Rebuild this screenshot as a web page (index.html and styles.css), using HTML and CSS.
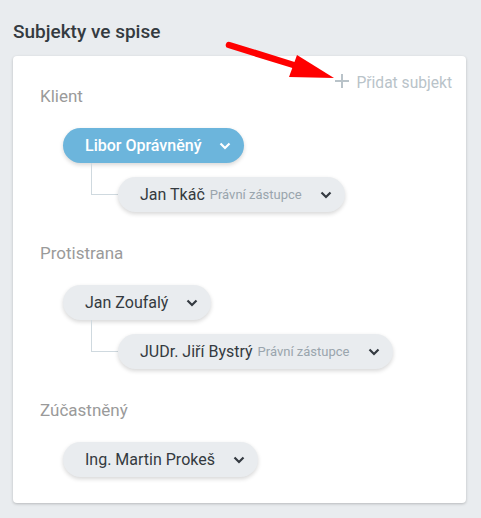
FILE: index.html
```html
<!DOCTYPE html>
<html lang="cs">
<head>
<meta charset="utf-8">
<title>Subjekty ve spise</title>
<link rel="stylesheet" href="styles.css">
</head>
<body>
<h1 class="title">Subjekty ve spise</h1>
<div class="card">
  <div class="section">
    <div class="head">
      <div class="label first">Klient</div>
      <div class="add"><svg class="plus" width="14" height="14" viewBox="0 0 14 14"><path d="M7 0v14M0 7h14" stroke="#b9c3c9" stroke-width="2"/></svg><span>Přidat subjekt</span></div>
    </div>
    <div class="tree">
      <div class="chip blue"><span class="name">Libor Oprávněný</span><svg class="chev" width="12" height="8" viewBox="0 0 12 8"><path d="M1.5 1.5l4.5 4.5 4.5-4.5" fill="none" stroke="#fff" stroke-width="2.2"/></svg></div>
      <div class="child">
        <div class="conn"></div>
        <div class="chip"><span class="name">Jan Tkáč</span><span class="role">Právní zástupce</span><svg class="chev" width="12" height="8" viewBox="0 0 12 8"><path d="M1.5 1.5l4.5 4.5 4.5-4.5" fill="none" stroke="#343a40" stroke-width="2.2"/></svg></div>
      </div>
    </div>
  </div>
  <div class="section">
    <div class="label">Protistrana</div>
    <div class="tree">
      <div class="chip"><span class="name">Jan Zoufalý</span><svg class="chev" width="12" height="8" viewBox="0 0 12 8"><path d="M1.5 1.5l4.5 4.5 4.5-4.5" fill="none" stroke="#343a40" stroke-width="2.2"/></svg></div>
      <div class="child">
        <div class="conn"></div>
        <div class="chip"><span class="name">JUDr. Jiří Bystrý</span><span class="role">Právní zástupce</span><svg class="chev" width="12" height="8" viewBox="0 0 12 8"><path d="M1.5 1.5l4.5 4.5 4.5-4.5" fill="none" stroke="#343a40" stroke-width="2.2"/></svg></div>
      </div>
    </div>
  </div>
  <div class="section">
    <div class="label">Zúčastněný</div>
    <div class="tree">
      <div class="chip"><span class="name">Ing. Martin Prokeš</span><svg class="chev" width="12" height="8" viewBox="0 0 12 8"><path d="M1.5 1.5l4.5 4.5 4.5-4.5" fill="none" stroke="#343a40" stroke-width="2.2"/></svg></div>
    </div>
  </div>
</div>
<svg class="arrow" width="481" height="518" viewBox="0 0 481 518">
  <path d="M229 45L300 67" stroke="#f00" stroke-width="6.5" stroke-linecap="round"/>
  <polygon points="297,55 334,78 289,77" fill="#f00"/>
</svg>
</body>
</html>
```
FILE: styles.css
```css
html, body {
  margin: 0;
}
body {
  position: relative;
  background: #e9ecef;
  padding: 20px 15px 40px 13px;
  font-family: Roboto, "Liberation Sans", sans-serif;
  color: #343a40;
}
.title {
  margin: 0 0 12px 0;
  font-size: 19px;
  line-height: 24px;
  font-weight: 500;
  color: #343a40;
}
.card {
  background: #fff;
  border-radius: 4px;
  box-shadow: 0 1px 3px rgba(0, 0, 0, 0.22);
  padding: 17px 14px 26px 27px;
}
.head {
  display: flex;
  justify-content: space-between;
  align-items: flex-start;
}
.label {
  font-size: 17px;
  line-height: 20px;
  color: #9a9a9a;
  margin-top: 31px;
}
.label.first {
  margin-top: 13px;
}
.add {
  display: flex;
  align-items: center;
  gap: 7px;
  font-size: 15.6px;
  line-height: 20px;
  color: #b9c3c9;
}
.plus {
  display: block;
  margin-top: -4px;
}
.tree {
  display: flex;
  flex-direction: column;
  align-items: flex-start;
  margin-top: 22px;
  margin-left: 23px;
}
.chip {
  display: flex;
  align-items: center;
  height: 35px;
  box-sizing: border-box;
  padding: 0 13px 0 22px;
  border-radius: 18px;
  background: #e9ecef;
  box-shadow: 0 2px 4px rgba(0, 0, 0, 0.16);
  font-size: 16px;
  white-space: nowrap;
}
.chip.blue {
  background: #6cb5dc;
  color: #fff;
  font-weight: 500;
}
.name {
  color: inherit;
}
.role {
  font-size: 13px;
  color: #9aa5ad;
  margin-left: 5px;
}
.chev {
  display: block;
  margin-left: 18px;
}
.child {
  display: flex;
  margin-top: 14px;
}
.conn {
  margin-left: 28px;
  margin-top: -14px;
  width: 26px;
  height: 31px;
  border-left: 1px solid #cfd9df;
  border-bottom: 1px solid #cfd9df;
}
.arrow {
  position: absolute;
  left: 0;
  top: 0;
  pointer-events: none;
}
```
